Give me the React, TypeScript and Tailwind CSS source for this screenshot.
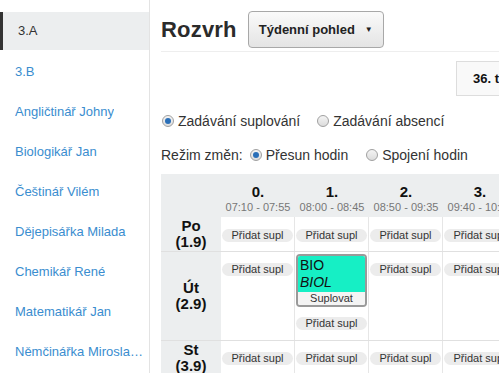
import { ReactNode } from "react";

const people = [
  "3.B",
  "Angličtinář Johny",
  "Biologikář Jan",
  "Češtinář Vilém",
  "Dějepisářka Milada",
  "Chemikář René",
  "Matematikář Jan",
  "Němčinářka Miroslava",
];

const lessons = [
  { n: "0.", t: "07:10 - 07:55" },
  { n: "1.", t: "08:00 - 08:45" },
  { n: "2.", t: "08:50 - 09:35" },
  { n: "3.", t: "09:40 - 10:25" },
  { n: "4.", t: "10:45 - 11:30" },
];

function Radio({ checked, label }: { checked?: boolean; label: string }) {
  return (
    <label className="flex items-center gap-[4px]">
      <span className="w-[12px] h-[12px] rounded-full border border-[#a0a0a0] bg-gradient-to-b from-[#f4f4f4] to-[#dcdcdc] flex items-center justify-center">
        {checked && <span className="w-[6px] h-[6px] rounded-full bg-[#2a6fb8]" />}
      </span>
      <span>{label}</span>
    </label>
  );
}

function Pill() {
  return (
    <div className="mx-[1px] h-[13px] rounded-full bg-[#ececec] text-[11px] leading-[13px] text-center text-[#333]">
      Přidat supl
    </div>
  );
}

function Cell({ children, h, pt }: { children?: ReactNode; h: string; pt: string }) {
  return (
    <div className={`w-[74px] shrink-0 bg-white border-r border-[#e6e6e6] ${h} ${pt}`}>{children}</div>
  );
}

function Day({ name, date, h, pt }: { name: string; date: string; h: string; pt: string }) {
  return (
    <div className="flex border-b border-[#e0e0e0]">
      <div className={`w-[60px] shrink-0 bg-[#eceeef] flex flex-col items-center justify-center text-[15px] leading-[16px] font-bold text-[#111] ${h}`}>
        <span>{name}</span>
        <span>{date}</span>
      </div>
      {lessons.map((l, i) => (
        <Cell key={l.n} h={h} pt={pt}>
          {name === "Út" && i === 1 ? (
            <div className="-mt-[9px]">
              <div className="mx-[1px] rounded-[4px] border-2 border-[#9a9a9a] overflow-hidden">
                <div className="bg-[#16efc5] px-[2px] pt-[1px] pb-[1px] text-[14px] leading-[17px] text-[#111]">
                  <div>BIO</div>
                  <div className="italic">BIOL</div>
                </div>
                <div className="bg-[#f4f4f4] text-[11px] leading-[13px] text-center text-[#333]">Suplovat</div>
              </div>
              <div className="mt-[10px]">
                <Pill />
              </div>
            </div>
          ) : (
            <Pill />
          )}
        </Cell>
      ))}
    </div>
  );
}

export default function App() {
  return (
    <div className="flex w-[499px] h-[373px] overflow-hidden bg-white font-['Liberation_Sans',Arial,sans-serif] text-[#333]">
      <aside className="w-[150px] shrink-0 border-r border-[#e3e3e3] pt-3 text-[13px]">
        <div className="h-[38px] mb-[2px] flex items-center pl-[15px] bg-[#eceeef] border-l-[3px] border-[#333] text-[#333]">
          3.A
        </div>
        {people.map((p) => (
          <div key={p} className="h-10 flex items-center pl-[15px] pr-[6px] text-[#3a8dcf] whitespace-nowrap">
            <span className="truncate">{p}</span>
          </div>
        ))}
      </aside>

      <main className="flex-1 min-w-0 overflow-hidden pl-[11px] pt-[11px]">
        <div className="flex items-center gap-[11px] pb-[3px] border-b border-[#eeeeee]">
          <h1 className="text-[22px] font-bold text-[#2b2b2b] tracking-[0.2px]">Rozvrh</h1>
          <button className="h-[37px] w-[136px] px-[10px] rounded-[4px] border border-[#a8a8a8] bg-gradient-to-b from-[#fafafa] to-[#e4e4e4] text-[13px] font-bold text-[#222] flex items-center justify-between">
            Týdenní pohled <span className="text-[8px]">▼</span>
          </button>
        </div>

        <div className="flex mt-[9px] ml-[295px]">
          <div className="h-[35px] shrink-0 border border-[#dddddd] bg-[#f9f9f9] pl-[16px] pr-3 flex items-center text-[13px] font-bold text-[#111] whitespace-nowrap">
            36. týden (1.9. - 7.9.)
          </div>
        </div>

        <div className="flex items-center gap-[17px] mt-[15px] h-5 pl-px text-[14px]">
          <Radio checked label="Zadávání suplování" />
          <Radio label="Zadávání absencí" />
        </div>

        <div className="flex items-center mt-[14px] h-5 text-[14px]">
          <span className="mr-[7px]">Režim změn:</span>
          <div className="flex items-center gap-[18px]">
            <Radio checked label="Přesun hodin" />
            <Radio label="Spojení hodin" />
          </div>
        </div>

        <div className="mt-[9px] bg-[#eceeef] w-max">
          <div className="flex h-[43px]">
            <div className="w-[60px] shrink-0" />
            {lessons.map((l) => (
              <div key={l.n} className="w-[74px] shrink-0 flex flex-col items-center pt-[10px]">
                <span className="text-[15px] leading-[16px] font-bold text-[#111]">{l.n}</span>
                <span className="text-[11px] leading-[14px] text-[#777] whitespace-nowrap">{l.t}</span>
              </div>
            ))}
          </div>
          <Day name="Po" date="(1.9)" h="h-[34px]" pt="pt-[12px]" />
          <Day name="Út" date="(2.9)" h="h-[88px]" pt="pt-[11px]" />
          <Day name="St" date="(3.9)" h="h-[34px]" pt="pt-[11px]" />
        </div>
      </main>
    </div>
  );
}
